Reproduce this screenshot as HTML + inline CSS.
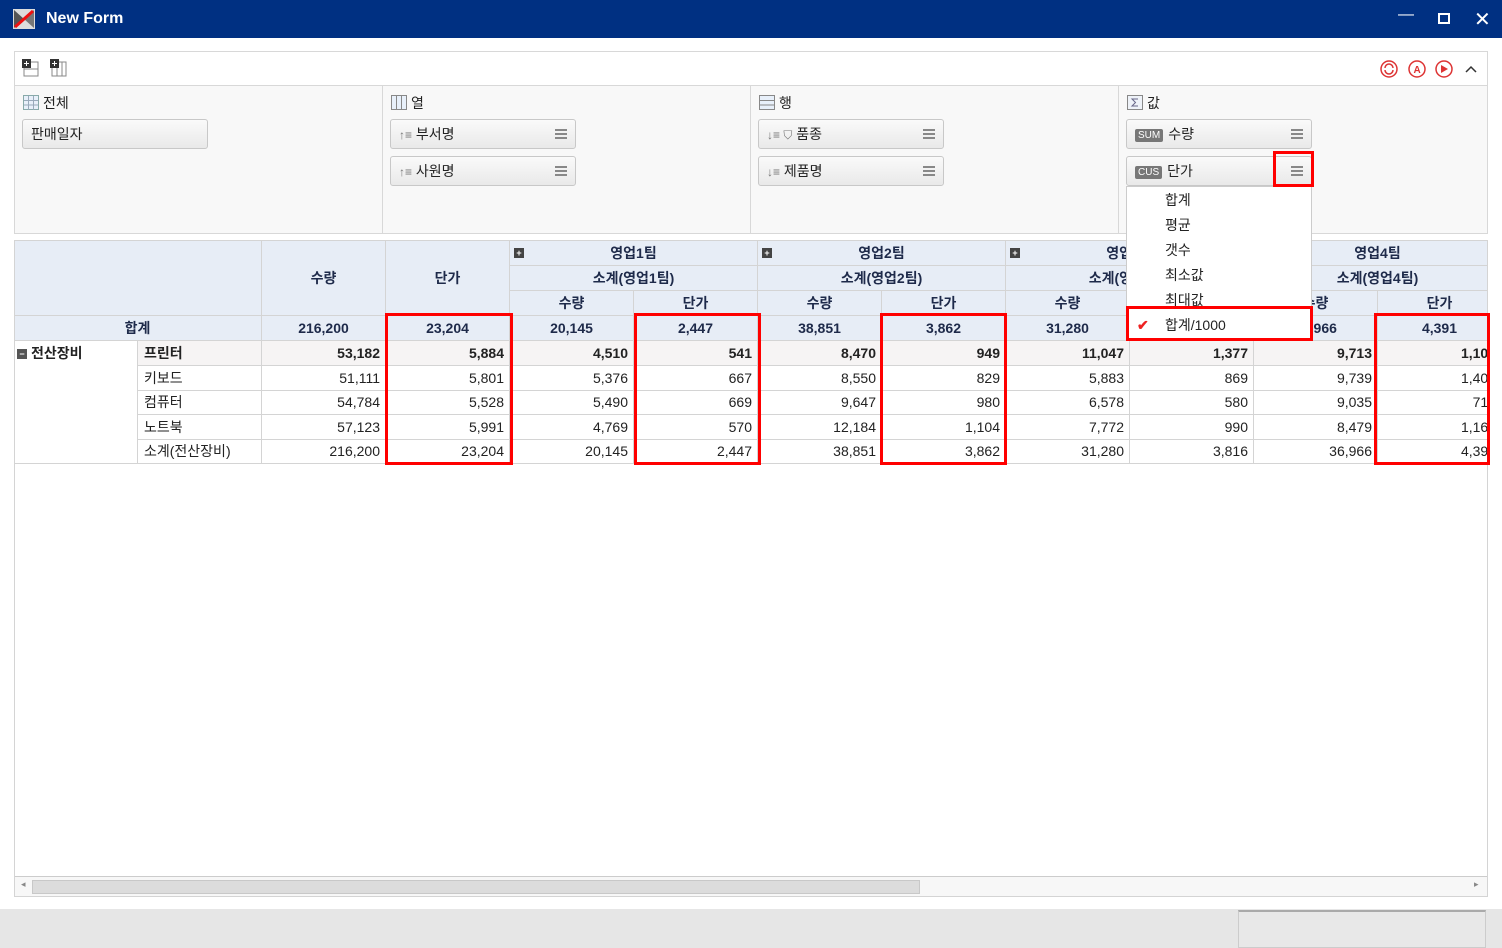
<!DOCTYPE html>
<html><head><meta charset="utf-8">
<style>
*{margin:0;padding:0;box-sizing:border-box}
body{width:1502px;height:948px;position:relative;overflow:hidden;background:#fff;font-family:"Liberation Sans","Noto Sans CJK KR","NanumGothic",sans-serif;font-size:14px;color:#222}
.a{position:absolute}
.title{left:0;top:0;width:1502px;height:38px;background:#003082;color:#fff;font-weight:bold;font-size:16px}
.panel{top:85px;height:149px;background:#f8f8f8;border:1px solid #d8d8d8}
.chip{height:30px;border:1px solid #c8c8c8;border-radius:3px;background:linear-gradient(#fafafa,#e9e9e9);font-size:14px;line-height:28px;padding-left:8px}
.menu{right:8px;top:9px;width:12px;height:10px;border-top:2px solid #888;border-bottom:2px solid #888}
.menu:after{content:"";position:absolute;left:0;right:0;top:2px;height:2px;background:#888}
.c{position:absolute;border-right:1px solid #d4d4d4;border-bottom:1px solid #d4d4d4;font-size:14px;line-height:24px;white-space:nowrap;overflow:hidden}
.h{background:#e7edf6;color:#1e2a4a;font-weight:bold;text-align:center}
.r{text-align:right;padding-right:5px}
.red{position:absolute;border:3px solid #f00}
.badge{display:inline-block;background:#777;color:#fff;font-size:10px;line-height:13px;padding:0 3px;border-radius:2px;margin-right:5px;vertical-align:1px}
.plus{display:inline-block;width:10px;height:10px;background:#444;color:#fff;font-size:9px;line-height:10px;text-align:center;font-weight:bold}
</style></head><body>
<div class="a title">
 <svg class="a" style="left:13px;top:9px" width="22" height="20"><rect width="22" height="20" fill="#ddd"/><path d="M1 1L11 10L1 19Z" fill="#555"/><path d="M21 1L11 10L21 19Z" fill="#777"/><path d="M2 18L20 2" stroke="#e11" stroke-width="3"/></svg>
 <span class="a" style="left:46px;top:10px">New Form</span>
 <span class="a" style="left:1398px;top:6px;font-weight:normal">&#x2014;</span>
 <div class="a" style="left:1438px;top:13px;width:12px;height:11px;border:2px solid #fff"></div>
 <span class="a" style="left:1474px;top:7px;font-size:20px;font-weight:normal">✕</span>
</div>
<!-- toolbar -->
<div class="a" style="left:14px;top:51px;width:1474px;height:35px;border:1px solid #d8d8d8;background:#fff">
 <svg class="a" style="left:7px;top:6px" width="56" height="22"><rect x="2" y="4" width="14" height="14" fill="#fff" stroke="#888"/><line x1="2" y1="11" x2="16" y2="11" stroke="#888"/><rect x="0" y="1" width="9" height="9" fill="#333"/><path d="M2 5.5H7M4.5 3V8" stroke="#fff"/><rect x="30" y="4" width="14" height="14" fill="#fff" stroke="#888"/><line x1="35" y1="4" x2="35" y2="18" stroke="#888"/><line x1="40" y1="4" x2="40" y2="18" stroke="#888"/><rect x="28" y="1" width="9" height="9" fill="#333"/><path d="M30 5.5H35M32.5 3V8" stroke="#fff"/></svg>
 <svg class="a" style="left:1364px;top:7px" width="100" height="20"><circle cx="10" cy="10" r="8" fill="none" stroke="#d33" stroke-width="1.5"/><path d="M6 9a4 4 0 0 1 8 0M14 11a4 4 0 0 1-8 0" fill="none" stroke="#d33" stroke-width="1.5"/><circle cx="38" cy="10" r="8" fill="none" stroke="#d33" stroke-width="1.5"/><text x="34.5" y="14" font-size="10" fill="#d33" font-family="Liberation Sans" font-weight="bold">A</text><circle cx="65" cy="10" r="8" fill="none" stroke="#d33" stroke-width="1.5"/><path d="M62 6L69 10L62 14Z" fill="#d33"/><path d="M87 13L92 8L97 13" fill="none" stroke="#333" stroke-width="1.5"/></svg>
</div>
<!-- panels -->
<div class="a panel" style="left:14px;width:369px">
 <svg class="a" style="left:8px;top:9px" width="16" height="15"><rect x=".5" y=".5" width="15" height="14" fill="#e8f0fa" stroke="#8aa"/><path d="M5.5 1V15M10.5 1V15M1 5.5H15M1 10H15" stroke="#9ab"/></svg>
 <span class="a" style="left:28px;top:7px">전체</span>
 <div class="a chip" style="left:7px;top:33px;width:186px">판매일자</div>
</div>
<div class="a panel" style="left:382px;width:369px">
 <svg class="a" style="left:8px;top:9px" width="16" height="15"><rect x=".5" y=".5" width="15" height="14" fill="#e8f0fa" stroke="#888"/><path d="M5.5 1V15M10.5 1V15" stroke="#888"/></svg>
 <span class="a" style="left:28px;top:7px">열</span>
 <div class="a chip" style="left:7px;top:33px;width:186px"><span style="color:#777;font-size:12px">↑≡</span> 부서명<div class="a menu"></div></div>
 <div class="a chip" style="left:7px;top:70px;width:186px"><span style="color:#777;font-size:12px">↑≡</span> 사원명<div class="a menu"></div></div>
</div>
<div class="a panel" style="left:750px;width:369px">
 <svg class="a" style="left:8px;top:9px" width="16" height="15"><rect x=".5" y=".5" width="15" height="14" fill="#e8f0fa" stroke="#888"/><path d="M1 5.5H15M1 10H15" stroke="#888"/></svg>
 <span class="a" style="left:28px;top:7px">행</span>
 <div class="a chip" style="left:7px;top:33px;width:186px"><span style="color:#777;font-size:12px">↓≡ ⛉</span> 품종<div class="a menu"></div></div>
 <div class="a chip" style="left:7px;top:70px;width:186px"><span style="color:#777;font-size:12px">↓≡</span> 제품명<div class="a menu"></div></div>
</div>
<div class="a panel" style="left:1118px;width:370px">
 <svg class="a" style="left:8px;top:9px" width="16" height="15"><rect x=".5" y=".5" width="15" height="14" fill="#eef2f8" stroke="#888"/><path d="M11 4H5L8.5 7.5L5 11H11" fill="none" stroke="#668"/></svg>
 <span class="a" style="left:28px;top:7px">값</span>
 <div class="a chip" style="left:7px;top:33px;width:186px"><span class="badge">SUM</span>수량<div class="a menu"></div></div>
 <div class="a chip" style="left:7px;top:70px;width:186px"><span class="badge">CUS</span>단가<div class="a menu"></div></div>
</div>
<!-- grid area -->
<div class="a" style="left:14px;top:240px;width:1474px;height:657px;border:1px solid #d4d4d4;background:#fff;overflow:hidden" id="g"></div>
<!-- scrollbar -->
<div class="a" style="left:15px;top:876px;width:1472px;height:20px;background:#f7f7f7;border-top:1px solid #ccc">
 <div class="a" style="left:17px;top:3px;width:888px;height:14px;background:#dcdcdc;border:1px solid #c8c8c8"></div>
 <span class="a" style="left:6px;top:2px;font-size:9px;color:#888">◂</span><span class="a" style="left:1459px;top:2px;font-size:9px;color:#888">▸</span>
</div>
<div class="a" style="left:0;top:909px;width:1502px;height:39px;background:#e6e6e6"></div>
<div class="a" style="left:1238px;top:910px;width:248px;height:38px;border:1px solid #ccc;border-top:2px solid #aaa;background:#e8e8e8"></div>
<!-- dropdown -->
<div class="a" style="left:1126px;top:186px;width:186px;height:154px;background:#fff;border:1px solid #ccc;font-size:14px;line-height:25px">
 <div style="padding-left:38px;padding-top:1px">합계<br>평균<br>갯수<br>최소값<br>최대값<br>합계/1000</div>
 <span class="a" style="left:10px;top:126px;color:#e22;font-weight:bold">✔</span>
</div>
<div class="red" style="left:1126px;top:306px;width:187px;height:35px"></div>
<div class="red" style="left:1273px;top:151px;width:41px;height:36px"></div>
<div class="red" style="left:385px;top:313px;width:128px;height:152px"></div>
<div class="red" style="left:634px;top:313px;width:127px;height:152px"></div>
<div class="red" style="left:880px;top:313px;width:127px;height:152px"></div>
<div class="red" style="left:1374px;top:313px;width:116px;height:152px"></div>
<script>
var g=document.getElementById('g'),o=15,t=241,H='';
function c(x,y,w,h,txt,cls,st){H+='<div class="c '+cls+'" style="left:'+(x-o)+'px;top:'+(y-t)+'px;width:'+w+'px;height:'+h+'px;line-height:'+(h-1)+'px;'+(st||'')+'">'+txt+'</div>';}
c(14,241,248,75,'','h');
c(262,241,124,75,'수량','h');c(386,241,124,75,'단가','h');
var teams=['영업1팀','영업2팀','영업3팀','영업4팀'];
for(var i=0;i<4;i++){var x=510+i*248;
 c(x,241,248,25,(i<3?'<span class="plus" style="position:absolute;left:4px;top:7px">+</span>':'')+teams[i],'h');
 c(x,266,248,25,'소계('+teams[i]+')','h');
 c(x,291,124,25,'수량','h');c(x+124,291,124,25,'단가','h');}
var tot=['216,200','23,204','20,145','2,447','38,851','3,862','31,280','','36,966','4,391'];
c(14,316,248,25,'합계','h');
for(var j=0;j<10;j++)c(262+j*124,316,124,25,tot[j],'h','');
var rows=[['프린터','53,182','5,884','4,510','541','8,470','949','11,047','1,377','9,713','1,108'],
['키보드','51,111','5,801','5,376','667','8,550','829','5,883','869','9,739','1,408'],
['컴퓨터','54,784','5,528','5,490','669','9,647','980','6,578','580','9,035','718'],
['노트북','57,123','5,991','4,769','570','12,184','1,104','7,772','990','8,479','1,168'],
['소계(전산장비)','216,200','23,204','20,145','2,447','38,851','3,862','31,280','3,816','36,966','4,391']];
var ys=[341,366,391,415,440],hs=[25,25,24,25,24];
c(14,341,124,123,'<span class="plus" style="background:#555;margin-right:4px;vertical-align:1px">−</span><b>전산장비</b>','','padding-left:3px;line-height:24px;background:#fff');
for(var r=0;r<5;r++){var b=r==0?'font-weight:bold;background:#f6f4f4;':'';
 c(138,ys[r],124,hs[r],rows[r][0],'',b+'padding-left:6px');
 for(var j=0;j<10;j++)c(262+j*124,ys[r],124,hs[r],rows[r][j+1],'r',b);}
g.innerHTML=H;
</script>
</body></html>
